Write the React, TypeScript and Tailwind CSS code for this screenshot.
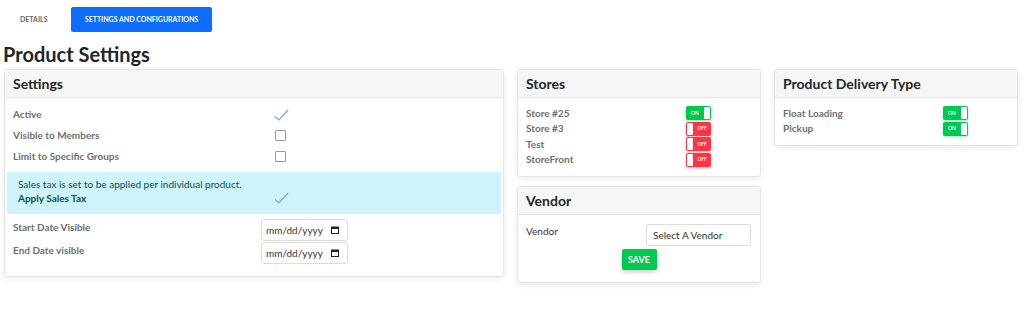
import React from "react";

function Toggle({ on }: { on: boolean }) {
  return on ? (
    <div className="flex h-[14px] w-[25px] items-center rounded-[2px] bg-[#00c851] shadow-[0_1px_3px_rgba(0,200,81,0.4)]">
      <span className="flex-1 text-center text-[5px] font-semibold leading-none text-white">ON</span>
      <span className="mr-[1px] h-[12px] w-[6px] rounded-[1px] bg-white" />
    </div>
  ) : (
    <div className="flex h-[14px] w-[25px] items-center rounded-[2px] bg-[#ff3547] shadow-[0_1px_3px_rgba(255,53,71,0.4)]">
      <span className="ml-[1px] h-[12px] w-[6px] rounded-[1px] bg-white" />
      <span className="flex-1 text-center text-[5px] font-semibold leading-none text-white">OFF</span>
    </div>
  );
}

function Check() {
  return (
    <svg width="15" height="12" viewBox="0 0 15 12" fill="none">
      <path d="M1 7.5 L5 11 L14 1" stroke="#6ea8fe" strokeWidth="1.2" />
    </svg>
  );
}

function Box() {
  return <span className="block h-[11px] w-[11px] rounded-[1px] border border-[#999] bg-white" />;
}

function Card({ title, children, className }: { title: string; children: React.ReactNode; className?: string }) {
  return (
    <div className={"rounded-[3px] border border-[#e6e6e6] bg-white shadow-[0_2px_6px_rgba(0,0,0,0.08)] " + (className ?? "")}>
      <div className="flex h-[28px] items-center border-b border-[#e4e4e4] bg-[#f6f6f6] px-[8px] text-[14px] font-bold text-[#212529]">
        {title}
      </div>
      {children}
    </div>
  );
}

const labelCls = "text-[10px] font-bold text-[#6f6f6f]";

function DateInput() {
  return (
    <div className="flex h-[22px] w-[87px] items-center justify-between rounded-[3px] border border-[#dcdcdc] bg-white pl-[4px] pr-[8px] text-[10px] text-[#333]">
      <span>mm/dd/yyyy</span>
      <svg width="8" height="8" viewBox="0 0 8 8">
        <rect x="0.5" y="1" width="7" height="6.5" fill="none" stroke="#222" strokeWidth="1" />
        <rect x="0.5" y="1" width="7" height="2" fill="#222" />
      </svg>
    </div>
  );
}

export default function App() {
  return (
    <main className="min-h-screen bg-white font-['Lato',sans-serif] text-[#212529]">
      <div className="flex items-center pt-[7px]">
        <div className="ml-[20px] w-[51px] text-[7px] font-bold text-[#666]">DETAILS</div>
        <div className="flex h-[25px] w-[141px] items-center justify-center rounded-[2px] bg-[#0d6efd] text-[7px] font-bold text-white">
          SETTINGS AND CONFIGURATIONS
        </div>
      </div>

      <h1 className="ml-[3px] mt-[8px] text-[20px] font-bold leading-[28px] text-[#212529]">Product Settings</h1>

      <div className="mt-[1px] flex items-start px-[4px]">
        <Card title="Settings" className="w-[500px]">
          <div className="pt-[6px]">
            <div className="flex h-[21px] items-center pl-[8px]">
              <span className={labelCls + " w-[261px]"}>Active</span>
              <Check />
            </div>
            <div className="flex h-[21px] items-center pl-[8px]">
              <span className={labelCls + " w-[262px]"}>Visible to Members</span>
              <Box />
            </div>
            <div className="flex h-[21px] items-center pl-[8px]">
              <span className={labelCls + " w-[262px]"}>Limit to Specific Groups</span>
              <Box />
            </div>
            <div className="mx-[2px] mt-[5px] bg-[#cff4fc] pb-[9px] pl-[11px] pt-[5px] text-[10px] text-[#055160]">
              <div className="leading-[14px]">Sales tax is set to be applied per individual product.</div>
              <div className="flex items-center leading-[14px]">
                <span className="w-[256px] font-bold">Apply Sales Tax</span>
                <Check />
              </div>
            </div>
            <div className="flex flex-col gap-[1px] pb-[12px] pt-[5px]">
              <div className="flex items-start pl-[8px]">
                <span className={labelCls + " w-[248px] pt-[1px]"}>Start Date Visible</span>
                <DateInput />
              </div>
              <div className="flex items-start pl-[8px]">
                <span className={labelCls + " w-[248px] pt-[1px]"}>End Date visible</span>
                <DateInput />
              </div>
            </div>
          </div>
        </Card>

        <div className="ml-[13px] flex w-[244px] flex-col gap-[9px]">
          <Card title="Stores">
            <div className="flex flex-col gap-[1px] px-[8px] pb-[9px] pt-[8px]">
              {[
                ["Store #25", true],
                ["Store #3", false],
                ["Test", false],
                ["StoreFront", false],
              ].map(([name, on]) => (
                <div key={name as string} className="flex h-[14.5px] items-center">
                  <span className={labelCls + " w-[160px]"}>{name}</span>
                  <Toggle on={on as boolean} />
                </div>
              ))}
            </div>
          </Card>
          <Card title="Vendor">
            <div className="px-[8px] pb-[12px] pt-[9px]">
              <div className="flex items-start">
                <span className="w-[120px] text-[10px] text-[#333]">Vendor</span>
                <div className="flex h-[22px] w-[105px] items-center rounded-[3px] border border-[#dcdcdc] px-[6px] text-[10px] text-[#333]">
                  Select A Vendor
                </div>
              </div>
              <div className="mt-[3px] flex justify-center">
                <button className="h-[21px] w-[35px] rounded-[2px] bg-[#00c851] text-[9px] font-bold text-white shadow-[0_2px_4px_rgba(0,0,0,0.2)]">
                  SAVE
                </button>
              </div>
            </div>
          </Card>
        </div>

        <Card title="Product Delivery Type" className="ml-[13px] w-[244px]">
          <div className="flex flex-col gap-[1px] px-[8px] pb-[9px] pt-[8px]">
            {["Float Loading", "Pickup"].map((name) => (
              <div key={name} className="flex h-[14.5px] items-center">
                <span className={labelCls + " w-[160px]"}>{name}</span>
                <Toggle on />
              </div>
            ))}
          </div>
        </Card>
      </div>
    </main>
  );
}
